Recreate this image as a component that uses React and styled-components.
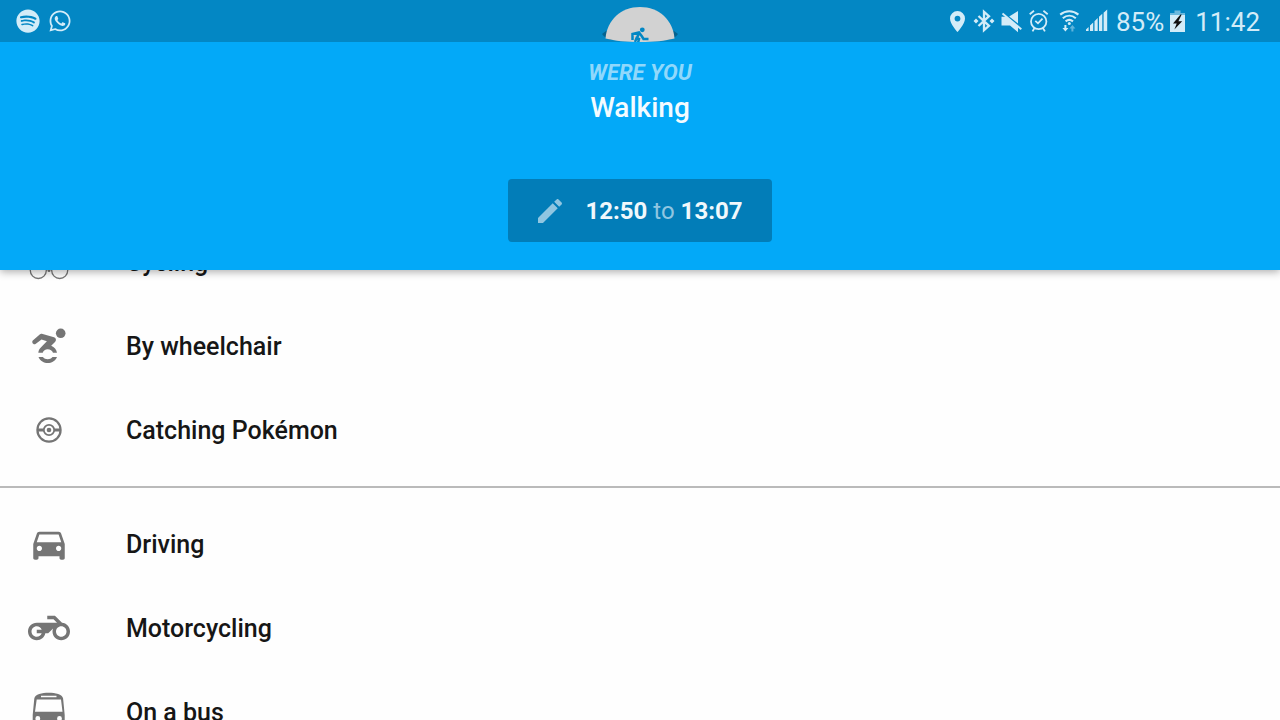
import React, { useLayoutEffect, useRef } from 'react';
import styled, { createGlobalStyle } from 'styled-components';
import { FaSpotify, FaWhatsapp } from 'react-icons/fa';

const GlobalStyle = createGlobalStyle`
  * {
    box-sizing: border-box;
  }

  body {
    margin: 0;
    font-family: Roboto, 'Noto Sans', sans-serif;
    background: #fefefe;
    color: #161616;
  }
`;

const Screen = styled.div`
  display: flex;
  flex-direction: column;
  height: 100vh;
  overflow: hidden;
`;

const StatusBar = styled.div`
  display: grid;
  grid-template-columns: 1fr auto 1fr;
  align-items: center;
  height: 42px;
  background: #0387c4;
  color: #d3ecf8;
`;

const StatusGroup = styled.div`
  display: flex;
  align-items: center;
  justify-content: ${({ $end }) => ($end ? 'flex-end' : 'flex-start')};
  gap: ${({ $end }) => ($end ? '6px' : '8px')};
  padding: ${({ $end }) => ($end ? '0 20px 0 0' : '0 0 0 16px')};
`;

const StatusText = styled.span`
  padding: 2px 0 0 ${({ $inset }) => $inset};
  font-size: 26px;
  line-height: 32px;
`;

const Avatar = styled.svg`
  display: block;
  align-self: end;
`;

const Header = styled.header`
  position: relative;
  z-index: 1;
  flex: none;
  background: #03a9f8;
  box-shadow: 0 2px 8px rgba(0, 0, 0, 0.32);
`;

const Summary = styled.div`
  display: flex;
  flex-direction: column;
  align-items: center;
  padding: 16px 16px 28px;
`;

const Question = styled.p`
  margin: 0;
  font-size: 22px;
  line-height: 30px;
  font-weight: 700;
  font-style: italic;
  color: #90d8fb;
`;

const Activity = styled.h1`
  margin: 0;
  font-size: 28px;
  line-height: 40px;
  font-weight: 500;
  color: #f4fbff;
`;

const TimeButton = styled.button`
  display: flex;
  align-items: center;
  gap: 20px;
  height: 63px;
  margin-top: 51px;
  padding: 0 30px 0 26px;
  border: 0;
  border-radius: 4px;
  background: #027db8;
  color: #90c6e1;
  font-family: inherit;
  font-size: 24px;
  line-height: 32px;
  cursor: pointer;

  strong {
    font-weight: 700;
    color: #f0f8fc;
  }
`;

const Choices = styled.main`
  flex: 1;
  min-height: 0;
  overflow-y: auto;
  scrollbar-width: none;
`;

const Group = styled.ul`
  list-style: none;
  margin: 0;
  padding: ${({ $first }) => ($first ? '0 0 13px' : '15px 0 0')};
  border-bottom: ${({ $first }) => ($first ? '2px solid #bababa' : '0')};
`;

const Choice = styled.button`
  display: flex;
  align-items: center;
  gap: 56px;
  width: 100%;
  height: 84px;
  padding: 0 28px;
  border: 0;
  background: transparent;
  color: inherit;
  font-family: inherit;
  font-size: 25px;
  line-height: 32px;
  font-weight: 500;
  text-align: left;
  cursor: pointer;
`;

const ChoiceIcon = styled.svg`
  flex: none;
  width: 42px;
  height: 42px;
  color: #757575;
`;

const StatusIcon = ({ width = 22, children }) => (
  <svg width={width} height="24" viewBox={`0 0 ${width} 24`} fill="currentColor" overflow="visible" aria-hidden="true">
    {children}
  </svg>
);

const LocationIcon = () => (
  <StatusIcon>
    <path fillRule="evenodd" d="M11.5 2A7.5 7.5 0 0 0 4 9.5C4 15 11.5 23 11.5 23S19 15 19 9.5A7.5 7.5 0 0 0 11.5 2Zm0 4.7a2.9 2.9 0 1 1 0 5.8 2.9 2.9 0 0 1 0-5.8Z" />
  </StatusIcon>
);

const BluetoothIcon = () => (
  <StatusIcon>
    <path d="M4.5 7 15 16.8 10 21.2V2.8L15 7.2 4.5 17" fill="none" stroke="currentColor" strokeWidth="2.3" />
    <path d="M-.5 12 2 9.5 4.500 12 2 14.500ZM15.500 12 18 9.500 20.500 12 18 14.500Z" />
  </StatusIcon>
);

const MutedIcon = () => (
  <StatusIcon>
    <path d="M7.2 7.4 16 2v12.6ZM-.5 7.8H4L16 18v5.2L8 16.4H-.5Z" />
    <path d="M.5 4.5 19.3 20.2" stroke="currentColor" strokeWidth="1.9" />
  </StatusIcon>
);

const AlarmIcon = () => (
  <StatusIcon>
    <g fill="none" stroke="currentColor" strokeWidth="1.8">
      <circle cx="8.7" cy="12.5" r="7.7" />
      <path d="M-.3 5.2 4 1.8M13.4 1.8l4.3 3.4M4.5 19l-2 3.4M12.9 19l2 3.4" />
      <path d="m5.3 11.8 2.7 2.5 4.5-4.6" />
    </g>
  </StatusIcon>
);

const WifiIcon = () => (
  <StatusIcon>
    <g fill="none" stroke="currentColor" strokeWidth="2.1">
      <path d="M2.2 5.6c5.4-4.4 12.8-4.4 18.2 0" />
      <path d="M4.8 9.2c3.9-3.3 9.1-3.3 13 0" />
      <path d="M7.6 12.4c2.3-1.9 5.1-1.9 7.4 0" />
    </g>
    <circle cx="11.3" cy="14.6" r="1.5" />
    <path d="M6.4 16h2v3h2l-3 3.4-3-3.4h2Z" />
    <path d="M13.4 22.4h2v-3h2l-3-3.4-3 3.4h2Z" opacity=".45" />
  </StatusIcon>
);

const SignalIcon = () => (
  <StatusIcon>
    <path d="M0 22v-1.5L2.6 18v4ZM4 22v-5.4L7.200 13.400V22ZM8.500 22V12.200L11.700 9V22ZM13 22V7.800L16.300 4.700V22ZM17.600 22V3.800L21.200.6V22Z" />
  </StatusIcon>
);

const BatteryIcon = () => (
  <StatusIcon width={15}>
    <path d="M4.5 1.5h6V4H15v3H0V4h4.5Z" opacity=".5" />
    <path d="M0 6h15v17H0Z" />
    <path d="M10.5 5.5 3 14.6h3.7L4.4 20.4l7.8-8.2H8.4l3.3-6.7Z" fill="#111" />
  </StatusIcon>
);

const PencilIcon = () => (
  <svg width="32" height="32" viewBox="0 0 24 24" fill="currentColor" aria-hidden="true">
    <path d="M3 17.25V21h3.75L17.81 9.94l-3.75-3.75L3 17.25zM20.71 7.04c.39-.39.39-1.02 0-1.41l-2.34-2.34c-.39-.39-1.02-.39-1.41 0l-1.83 1.83 3.75 3.75 1.83-1.83z" />
  </svg>
);

const WalkerAvatar = () => (
  <Avatar width="76" height="36" viewBox="0 0 76 36" aria-hidden="true">
    <path d="M4 25 0 28q3 4 9 6h58q6-2 9-6l-4-3Z" fill="#04638f" />
    <path d="M3.500 32.500C5 14 19 1 38 1s33 13 34.500 31.500C63 35 52 36 38 36S13 35 3.500 32.500Z" fill="#d2d2d2" />
    <circle cx="40.300" cy="23.800" r="2.400" fill="#0387c4" />
    <path d="M30.500 34v-6l6.500-1.500 3 4 1.500 2.500h5M37 27l-2 5 2 1-1 4M35 31l-2 5" fill="none" stroke="#0387c4" strokeWidth="2.500" />
  </Avatar>
);

const CyclingIcon = () => (
  <g fill="none" stroke="currentColor">
    <circle cx="10.300" cy="28.500" r="8" strokeWidth="1.300" />
    <circle cx="31.700" cy="28.500" r="8" strokeWidth="1.300" />
    <path d="m21 28.500-5-12h12l-7 12M16 16.500l-5 8M27 12l4 12" strokeWidth="1.500" />
    <circle cx="21" cy="28.500" r="1.500" fill="currentColor" stroke="none" />
  </g>
);

const WheelchairIcon = () => (
  <g fill="currentColor">
    <circle cx="32.700" cy="7.300" r="4.800" />
    <path d="M4.800 14.500 12 8.200q.8-.7 1.800-.4L26 11.300c2.200.8 2.600 3 1 4.800l-3.800 3.600c3.200 1.200 5.300 3.800 5.800 7.100h-4c-.8-2.200-2.800-3.600-5.300-3.600s-4.200 1.400-5 3.600h-4.400c.3-2.400 1.200-4.200 3-5.700l5.600-5.900-5.400-1.800-6 4.500c-2 1.300-4.300-1.500-2.700-3.400Z" />
    <path d="M10.500 31h4.400c2.200 2.900 7.400 2.900 9.600 0H29c-3.400 8-15 8-18.500 0Z" />
  </g>
);

const PokeballIcon = () => (
  <g fill="none" stroke="currentColor" strokeWidth="2.200">
    <circle cx="21" cy="20" r="11.600" />
    <circle cx="21" cy="20" r="5.200" strokeWidth="1.800" />
    <path d="M9.300 20H16M26 20h6.700" strokeWidth="3" />
    <circle cx="21" cy="20" r="2.300" fill="currentColor" stroke="none" />
  </g>
);

const CarIcon = () => (
  <path
    transform="translate(0 -1) scale(1.75)"
    fill="currentColor"
    d="M18.92 6.01C18.72 5.42 18.16 5 17.5 5h-11c-.66 0-1.21.42-1.42 1.01L3 12v8c0 .55.45 1 1 1h1c.55 0 1-.45 1-1v-1h12v1c0 .55.45 1 1 1h1c.55 0 1-.45 1-1v-8l-2.08-5.99zM6.500 16c-.83 0-1.500-.67-1.500-1.500S5.670 13 6.500 13s1.500.67 1.500 1.500S7.330 16 6.500 16zm11 0c-.83 0-1.500-.67-1.500-1.500s.67-1.500 1.500-1.500 1.500.67 1.500 1.500-.67 1.500-1.500 1.500zM5 11l1.500-4.500h11L19 11H5z"
  />
);

const MotorcycleIcon = () => (
  <path
    transform="translate(0 -1) scale(1.75)"
    fill="currentColor"
    d="M19.44 9.03L15.41 5H11v2h3.590l2 2H5c-2.800 0-5 2.200-5 5s2.200 5 5 5c2.460 0 4.450-1.690 4.900-4h1.650l2.770-2.770c-.21.54-.32 1.140-.32 1.770 0 2.800 2.200 5 5 5s5-2.200 5-5c0-2.650-1.970-4.770-4.560-4.970zM7.820 15C7.400 16.150 6.280 17 5 17c-1.630 0-3-1.370-3-3s1.370-3 3-3c1.280 0 2.400.85 2.820 2H5v2h2.820zM19 17c-1.660 0-3-1.340-3-3s1.340-3 3-3 3 1.340 3 3-1.340 3-3 3z"
  />
);

const BusIcon = () => (
  <path
    fill="currentColor"
    fillRule="evenodd"
    d="M4.700 23 6.300 6.500C7 2 14 .7 20.700.7s13.700 1.300 14.400 5.800L36.700 23v12h-2.500v4h-4v-4H11.200v4h-4v-4H4.700ZM7 19.700h27.500L33 7.500H8.700ZM13 3.800v1.500h15.500V3.800ZM9.800 24a2.400 2.400 0 1 0 0 4.800 2.400 2.400 0 0 0 0-4.800Zm21.700 0a2.400 2.400 0 1 0 0 4.800 2.400 2.400 0 0 0 0-4.800Z"
  />
);

const selfPowered = [
  { label: 'Cycling', icon: CyclingIcon },
  { label: 'By wheelchair', icon: WheelchairIcon },
  { label: 'Catching Pokémon', icon: PokeballIcon },
];

const vehicles = [
  { label: 'Driving', icon: CarIcon },
  { label: 'Motorcycling', icon: MotorcycleIcon },
  { label: 'On a bus', icon: BusIcon },
];

const ChoiceGroup = ({ items, first }) => (
  <Group $first={first}>
    {items.map(({ label, icon: Icon }) => (
      <li key={label}>
        <Choice type="button">
          <ChoiceIcon viewBox="0 0 42 42" aria-hidden="true">
            <Icon />
          </ChoiceIcon>
          {label}
        </Choice>
      </li>
    ))}
  </Group>
);

const App = () => {
  const listRef = useRef(null);

  // the list opens a little way down, with the first row half under the header
  useLayoutEffect(() => {
    listRef.current.scrollTop = 49;
  }, []);

  return (
    <Screen>
      <GlobalStyle />
      <Header>
        <StatusBar>
          <StatusGroup>
            <FaSpotify size={24} />
            <FaWhatsapp size={24} />
          </StatusGroup>
          <WalkerAvatar />
          <StatusGroup $end>
            <LocationIcon />
            <BluetoothIcon />
            <MutedIcon />
            <AlarmIcon />
            <WifiIcon />
            <SignalIcon />
            <StatusText $inset="2px">85%</StatusText>
            <BatteryIcon />
            <StatusText $inset="4px">11:42</StatusText>
          </StatusGroup>
        </StatusBar>
        <Summary>
          <Question>WERE YOU</Question>
          <Activity>Walking</Activity>
          <TimeButton type="button">
            <PencilIcon />
            <span>
              <strong>12:50</strong> to <strong>13:07</strong>
            </span>
          </TimeButton>
        </Summary>
      </Header>
      <Choices ref={listRef}>
        <ChoiceGroup items={selfPowered} first />
        <ChoiceGroup items={vehicles} />
      </Choices>
    </Screen>
  );
};

export default App;
